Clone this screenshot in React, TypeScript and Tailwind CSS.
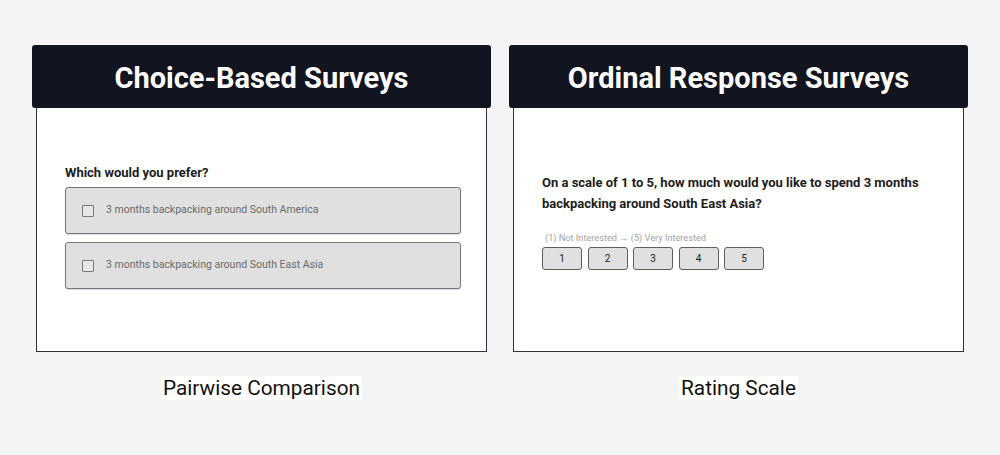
import React from "react";

function Header({ title }: { title: string }) {
  return (
    <div className="h-[63px] bg-[#12141f] rounded-[3px] flex items-center justify-center pt-[3px]">
      <span className="text-white text-[29px] font-bold leading-none">{title}</span>
    </div>
  );
}

function Option({ text }: { text: string }) {
  return (
    <div className="h-[47px] bg-[#e0e0e0] border border-[#76787d] rounded-[3px] flex items-center pl-4 gap-3 shadow-[0_1px_1px_rgba(0,0,0,0.15)]">
      <div className="w-[12px] h-[12px] border-[1.5px] border-[#7a7a7a] rounded-[1px] bg-[#e6e6e6]" />
      <span className="text-[10.5px] text-[#6b6b6b] leading-none">{text}</span>
    </div>
  );
}

export default function App() {
  return (
    <div
      className="w-[1000px] h-[455px] bg-[#f3f4f6] pt-[45px] px-[32px]"
      style={{ fontFamily: "Roboto, 'Noto Sans', sans-serif" }}
    >
      <div className="grid grid-cols-2 gap-[18px]">
        <div className="flex flex-col">
          <Header title="Choice-Based Surveys" />
          <div className="mx-[4px] h-[244px] bg-white border-[1.5px] border-t-0 border-[#2f323a] pt-[55px] pl-[28px] pr-[25px]">
            <div className="text-[13px] leading-[20px] font-bold text-[#1c1c1c] mb-[4px]">Which would you prefer?</div>
            <div className="flex flex-col gap-[8px]">
              <Option text="3 months backpacking around South America" />
              <Option text="3 months backpacking around South East Asia" />
            </div>
          </div>
          <div className="flex justify-center mt-[24px]">
            <span className="bg-white text-[20.8px] leading-[24px] text-[#111111] px-[2px]">Pairwise Comparison</span>
          </div>
        </div>
        <div className="flex flex-col">
          <Header title="Ordinal Response Surveys" />
          <div className="mx-[4px] h-[244px] bg-white border-[1.5px] border-t-0 border-[#2f323a] pt-[64px] pl-[28px] pr-[25px]">
            <div className="text-[13px] leading-[21px] font-bold text-[#1c1c1c] w-[400px]">
              On a scale of 1 to 5, how much would you like to spend 3 months backpacking around South East Asia?
            </div>
            <div className="mt-[17px] text-[9.2px] leading-[14px] text-[#a3a3a3] pl-[3px]">
              (1) Not Interested → (5) Very Interested
            </div>
            <div className="mt-[2px] flex gap-[5.5px]">
              {[1, 2, 3, 4, 5].map((n) => (
                <div
                  key={n}
                  className="w-[40px] h-[23px] bg-[#e0e0e0] border-[1.5px] border-[#5c5e63] rounded-[3px] flex items-center justify-center text-[10px] text-[#222222]"
                >
                  {n}
                </div>
              ))}
            </div>
          </div>
          <div className="flex justify-center mt-[24px]">
            <span className="bg-white text-[20.8px] leading-[24px] text-[#111111] px-[2px]">Rating Scale</span>
          </div>
        </div>
      </div>
    </div>
  );
}
